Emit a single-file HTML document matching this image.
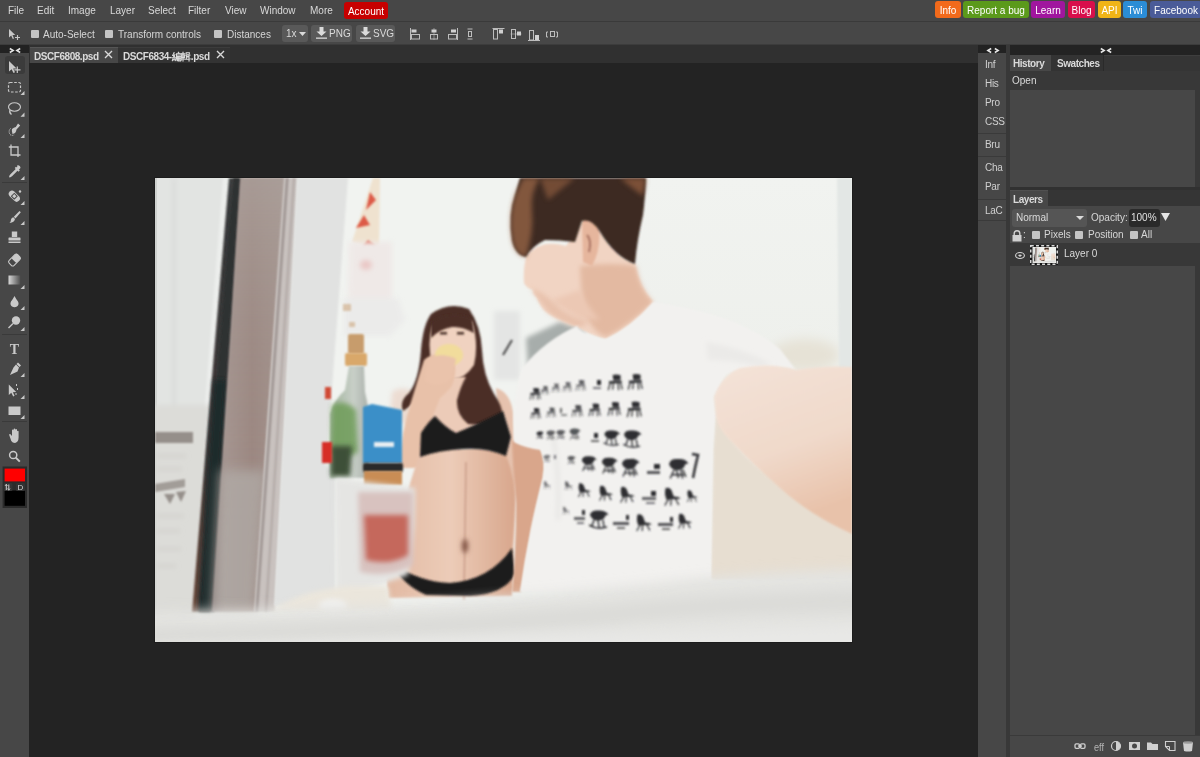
<!DOCTYPE html>
<html><head><meta charset="utf-8">
<style>
*{margin:0;padding:0;box-sizing:border-box}
html,body{width:1200px;height:757px;overflow:hidden;background:#232323;font-family:"Liberation Sans",sans-serif;color:#d6d6d6;font-size:10px}
.a{position:absolute}
.mi{position:absolute;top:5px;font-size:10px;color:#d9d9d9;line-height:12px;white-space:nowrap}
.btn{position:absolute;top:1px;height:17px;border-radius:3px;color:#fff;font-size:10px;line-height:19px;text-align:center;white-space:nowrap}
.cb{position:absolute;width:8px;height:8px;background:#c4c4c4;border-radius:1px}
.ot{position:absolute;font-size:10px;color:#d6d6d6;line-height:12px;white-space:nowrap}
.ob{position:absolute;top:25px;height:17px;background:#595959;border-radius:3px;color:#dadada;font-size:10px;line-height:17px;white-space:nowrap}
.tab{position:absolute;top:47px;height:16px;font-weight:bold;font-size:10px;line-height:17px;letter-spacing:-0.45px;color:#dadada;white-space:nowrap}
.ti{position:absolute;left:8px}
.cl{position:absolute;left:985px;font-size:10px;color:#d0d0d0;line-height:12px;letter-spacing:-0.3px}
.sep{position:absolute;height:1px;background:#3a3a3a}
svg{position:absolute;overflow:visible}
.mi,.ot,.ob,.btn,.tab,.cl,span.a{will-change:transform}
</style></head>
<body>
<!-- menubar -->
<div class="a" style="left:0;top:0;width:1200px;height:21px;background:#474747"></div>
<div class="a" style="left:0;top:21px;width:1200px;height:1px;background:#3a3a3a"></div>
<span class="mi" style="left:8px">File</span>
<span class="mi" style="left:37px">Edit</span>
<span class="mi" style="left:68px">Image</span>
<span class="mi" style="left:110px">Layer</span>
<span class="mi" style="left:148px">Select</span>
<span class="mi" style="left:188px">Filter</span>
<span class="mi" style="left:225px">View</span>
<span class="mi" style="left:260px">Window</span>
<span class="mi" style="left:310px">More</span>
<div class="btn" style="left:344px;top:2px;width:44px;background:#c70000">Account</div>
<div class="btn" style="left:935px;width:26px;background:#f26a1b">Info</div>
<div class="btn" style="left:963px;width:66px;background:#5b9a1b">Report a bug</div>
<div class="btn" style="left:1031px;width:34px;background:#a0169e">Learn</div>
<div class="btn" style="left:1068px;width:27px;background:#d80e4b">Blog</div>
<div class="btn" style="left:1098px;width:23px;background:#f0b417">API</div>
<div class="btn" style="left:1123px;width:24px;background:#2b8dd6">Twi</div>
<div class="btn" style="left:1150px;width:52px;background:#4a5b98">Facebook</div>

<!-- options bar -->
<div class="a" style="left:0;top:22px;width:1200px;height:23px;background:#474747"></div>
<svg style="left:9px;top:29px" width="12" height="11" viewBox="0 0 12 11"><path d="M0 0 L0 8.5 L2.2 6.6 L3.8 10 L5 9.4 L3.5 6.1 L6.3 6 Z" fill="#c8c8c8"/><path d="M8.5 6 V11 M6 8.5 H11" stroke="#c8c8c8" stroke-width="1.1"/></svg>
<div class="cb" style="left:31px;top:30px"></div>
<span class="ot" style="left:43px;top:29px">Auto-Select</span>
<div class="cb" style="left:105px;top:30px"></div>
<span class="ot" style="left:118px;top:29px">Transform controls</span>
<div class="cb" style="left:214px;top:30px"></div>
<span class="ot" style="left:227px;top:29px">Distances</span>
<div class="ob" style="left:282px;width:26px;padding-left:4px">1x</div>
<svg style="left:299px;top:32px" width="7" height="4" viewBox="0 0 7 4"><path d="M0 0 H7 L3.5 4 Z" fill="#dadada"/></svg>
<div class="ob" style="left:311px;width:41px;padding-left:18px">PNG</div>
<svg style="left:316px;top:27px" width="11" height="12" viewBox="0 0 11 12"><path d="M3.5 0 H7.5 V4.5 H10.5 L5.5 9 L0.5 4.5 H3.5 Z" fill="#dadada"/><rect x="0" y="10.5" width="11" height="1.3" fill="#dadada"/></svg>
<div class="ob" style="left:356px;width:39px;padding-left:17px">SVG</div>
<svg style="left:360px;top:27px" width="11" height="12" viewBox="0 0 11 12"><path d="M3.5 0 H7.5 V4.5 H10.5 L5.5 9 L0.5 4.5 H3.5 Z" fill="#dadada"/><rect x="0" y="10.5" width="11" height="1.3" fill="#dadada"/></svg>
<!-- align icons -->
<svg style="left:410px;top:28px" width="150" height="13" viewBox="0 0 150 13" fill="none" stroke="#bdbdbd" stroke-width="1">
  <path d="M0.5 0 V12"/><rect x="1.5" y="1.5" width="5" height="3" fill="#d0d0d0" stroke="none"/><rect x="1.5" y="6.5" width="8" height="4.5"/>
  <path d="M24 0 V12" stroke="#8a8a8a"/><rect x="21.5" y="1.5" width="5" height="3" fill="#d0d0d0" stroke="none"/><rect x="20.5" y="6.5" width="7" height="4.5"/>
  <path d="M47.5 0 V12"/><rect x="41" y="1.5" width="5" height="3" fill="#d0d0d0" stroke="none"/><rect x="38.5" y="6.5" width="8" height="4.5"/>
  <path d="M57.5 1 H62.5 M57.5 11 H62.5" /><rect x="58.5" y="3.5" width="3" height="5"/>
  <path d="M82.5 0.5 H94.5"/><rect x="83.5" y="1.5" width="4" height="9.5"/><rect x="89" y="1.5" width="4" height="4" fill="#d0d0d0" stroke="none"/>
  <path d="M100.5 6 H111.5" stroke="#8a8a8a"/><rect x="101.5" y="1.5" width="4" height="9"/><rect x="107" y="3.5" width="4" height="4" fill="#d0d0d0" stroke="none"/>
  <path d="M118 12.5 H130"/><rect x="119.5" y="2.5" width="4" height="9.5"/><rect x="125" y="7" width="4" height="5" fill="#d0d0d0" stroke="none"/>
  <path d="M136.5 4 V9 M147.5 4 V9"/><rect x="140.5" y="3.5" width="4" height="5"/><path d="M136.5 4 H138 M136.5 9 H138 M146 4 H147.5 M146 9 H147.5"/>
</svg>
<div class="a" style="left:0;top:44px;width:1200px;height:1px;background:#3c3c3c"></div>

<!-- tab strip -->
<div class="a" style="left:29px;top:45px;width:949px;height:18px;background:#303030"></div>
<div class="tab" style="left:30px;width:88px;background:#474747;border-top:1px solid #555"><span class="ti" style="left:4px">DSCF6808.psd</span></div>
<div class="tab" style="left:118px;width:112px;background:#333;border-top:1px solid #3c3c3c"><span class="ti" style="left:5px">DSCF6834-編輯.psd</span></div>
<svg style="left:104px;top:50px" width="9" height="9" viewBox="0 0 9 9"><path d="M1 1 L8 8 M8 1 L1 8" stroke="#d8d8d8" stroke-width="1.4"/></svg>
<svg style="left:216px;top:50px" width="9" height="9" viewBox="0 0 9 9"><path d="M1 1 L8 8 M8 1 L1 8" stroke="#d8d8d8" stroke-width="1.4"/></svg>

<!-- left tools -->
<div class="a" style="left:0;top:45px;width:29px;height:712px;background:#474747"></div>
<div class="a" style="left:0;top:45px;width:29px;height:8px;background:#222"></div>
<svg style="left:9px;top:48px" width="12" height="5" viewBox="0 0 12 5"><path d="M0.8 0.5 L4.2 2.5 L0.8 4.5 M11.2 0.5 L7.8 2.5 L11.2 4.5" fill="none" stroke="#e6e6e6" stroke-width="1.5"/></svg>
<div class="a" style="left:5px;top:56px;width:20px;height:18px;background:#3b3b3b;border-radius:3px"></div>
<svg style="left:0;top:0" width="29" height="757" viewBox="0 0 29 757">
 <g fill="#c9c9c9" stroke="none">
  <!-- corner triangles -->
  <path d="M24.5 91 V95 H20.5 Z"/><path d="M24.5 112.5 V116.8 H20.5 Z"/><path d="M24.5 134 V138 H20.5 Z"/>
  <path d="M24.5 176 V180 H20.5 Z"/><path d="M24.5 201 V205 H20.5 Z"/><path d="M24.5 221 V225 H20.5 Z"/>
  <path d="M24.5 285 V289 H20.5 Z"/><path d="M24.5 306 V310 H20.5 Z"/><path d="M24.5 327 V331 H20.5 Z"/>
  <path d="M24.5 373 V377 H20.5 Z"/><path d="M24.5 395 V399 H20.5 Z"/><path d="M24.5 415 V419 H20.5 Z"/>
  <!-- move -->
  <path d="M9 61 L9 71.5 L11.6 69.2 L13.5 73 L15 72.2 L13.2 68.5 L16.6 68.4 Z"/>
  <path d="M17.3 66.5 V73 M14.3 69.8 H20.5" stroke="#c9c9c9" stroke-width="1.2"/>
  <!-- marquee -->
  <rect x="8.5" y="82.5" width="12" height="9.5" rx="1.5" fill="none" stroke="#c9c9c9" stroke-width="1.2" stroke-dasharray="2.6 1.6"/>
  <!-- lasso -->
  <ellipse cx="14.5" cy="107" rx="6" ry="4.2" fill="none" stroke="#c9c9c9" stroke-width="1.1"/>
  <path d="M10 110 Q 9 113 11.5 114.5" fill="none" stroke="#c9c9c9" stroke-width="1.3"/>
  <!-- quick select -->
  <path d="M18 123.5 L20.2 125.6 L16.5 129.5 Q16 133.5 12.5 134 Q11.5 131 12 129 Q13.8 127.5 15.8 127 Z"/>
  <path d="M10.5 128.5 Q8 131 10 134.5 Q12 136 14.5 134.8" fill="none" stroke="#c9c9c9" stroke-width="1" stroke-dasharray="1.2 1"/>
  <!-- crop -->
  <path d="M11 144.5 V155 H20.5 M8.8 147 H18 V157" fill="none" stroke="#c9c9c9" stroke-width="1.3"/>
  <!-- eyedropper -->
  <path d="M17.5 165 Q20.5 165.5 20.5 168 L19 169.5 L19.8 170.5 L18.5 171.8 L17.5 170.8 L12 176.3 Q10.5 177.8 9.2 177.3 Q8.7 176 10.2 174.5 L15.7 169 L14.7 168 L16 166.7 L17 167.5 Z"/>
 </g>
 <g fill="#3a3a3a"><rect x="2" y="182" width="25" height="1"/><rect x="2" y="334" width="25" height="1"/><rect x="2" y="421" width="25" height="1"/></g>
 <g fill="#c9c9c9">
  <!-- heal (bandage) -->
  <g transform="rotate(45 14.5 196)"><rect x="8" y="193" width="13" height="6.5" rx="3.2"/><rect x="12" y="193.8" width="5" height="5" fill="#474747"/><rect x="13" y="194.8" width="3" height="3"/></g>
  <circle cx="20" cy="191.5" r="1.2"/>
  <!-- brush -->
  <path d="M19.5 211 L20.8 212.3 L15.5 218.5 L13.8 216.8 Z"/><path d="M13.3 217.3 L15 219 Q14.5 222.5 9.5 223 Q11 221.5 11 219.5 Q11.5 217.5 13.3 217.3 Z"/>
  <!-- stamp -->
  <path d="M11.8 231.5 H17.2 V237 H11.8 Z"/><rect x="8.5" y="237.5" width="12" height="3" rx="0.6"/><rect x="8.5" y="241.5" width="12" height="1.5"/>
  <!-- eraser -->
  <g transform="rotate(-45 14.5 260)"><rect x="8.5" y="256.5" width="12" height="7" rx="2" fill="none" stroke="#c9c9c9" stroke-width="1.1"/><rect x="13.5" y="256.5" width="7" height="7" rx="1.5"/></g>
 </g>
 <defs><linearGradient id="gr" x1="0" x2="1"><stop offset="0" stop-color="#d8d8d8"/><stop offset="1" stop-color="#4c4c4c"/></linearGradient></defs>
 <rect x="8.5" y="275.5" width="12" height="9" fill="url(#gr)"/>
 <g fill="#c9c9c9">
  <!-- blur drop -->
  <path d="M14.5 296 Q16 299 18 301.5 Q19.5 304.5 17 306.5 Q14.5 308 12 306.5 Q9.5 304.5 11 301.5 Q13 299 14.5 296 Z"/>
  <!-- dodge -->
  <circle cx="16" cy="320.5" r="4.2"/><path d="M13 323.5 L8.5 328" stroke="#c9c9c9" stroke-width="1.4"/>
  <!-- type T -->
  <text x="14.5" y="353.5" font-family="Liberation Serif" font-weight="bold" font-size="14" text-anchor="middle">T</text>
  <!-- pen -->
  <path d="M18 362.5 L21 365.5 L19.5 367 L16.5 364 Z"/><path d="M16 364.5 L19 367.5 L17.5 371.5 L10 375 L13.5 367.5 Z"/>
  <!-- path select -->
  <path d="M8.8 384.5 L8.8 395 L11.3 392.8 L13.2 396.5 L14.6 395.8 L12.9 392.2 L16.2 392 Z"/>
  <path d="M16.5 384 V386 M17.5 388 V390 M16 393 V395" stroke="#c9c9c9" stroke-width="1"/>
  <!-- rect -->
  <rect x="8.5" y="406.5" width="12" height="8.5"/>
  <!-- hand -->
  <path d="M9.2 435 Q9 433.8 10.2 434 L12 436 V430.5 Q12 429.5 12.9 429.5 Q13.6 429.5 13.6 430.5 V434.5 V429.5 Q13.7 428.5 14.5 428.5 Q15.3 428.5 15.3 429.5 V434.5 V430 Q15.4 429 16.2 429 Q17 429 17 430 V435 V431.5 Q17.1 430.7 17.8 430.7 Q18.6 430.7 18.6 431.5 V437.5 Q18.5 442 15 443 Q12.5 443 11.3 441 Z"/>
  <!-- zoom -->
  <circle cx="13.2" cy="455" r="3.6" fill="none" stroke="#c9c9c9" stroke-width="1.5"/><path d="M15.8 457.6 L19.8 461.6" stroke="#c9c9c9" stroke-width="2"/>
 </g>
 <!-- color -->
 <rect x="2.6" y="466.5" width="24.4" height="41.5" fill="#2b2b2b"/>
 <rect x="4.6" y="468.6" width="20.4" height="12.8" fill="#ff0000"/>
 <rect x="4.6" y="490.5" width="20.4" height="15.3" fill="#000"/>
 <rect x="3.5" y="483" width="9" height="8" rx="1.5" fill="#333"/>
 <rect x="16" y="483" width="9" height="8" rx="1.5" fill="#333"/>
 <path d="M6.3 484.5 V490 M8.8 484.5 V490" stroke="#cfcfcf" stroke-width="1"/><path d="M5 486 L6.3 484.2 L7.5 486 M7.6 488.5 L8.8 490.3 L10 488.5" fill="none" stroke="#cfcfcf" stroke-width="0.8"/>
 <text x="20.5" y="490" font-size="8" fill="#d6d6d6" text-anchor="middle" font-family="Liberation Sans">D</text>
</svg>
<!-- collapsed column -->
<div class="a" style="left:978px;top:45px;width:29px;height:712px;background:#474747"></div>
<div class="a" style="left:978px;top:45px;width:29px;height:8px;background:#222"></div>
<svg style="left:987px;top:48px" width="12" height="5" viewBox="0 0 12 5"><path d="M4.2 0.5 L0.8 2.5 L4.2 4.5 M7.8 0.5 L11.2 2.5 L7.8 4.5" fill="none" stroke="#e6e6e6" stroke-width="1.5"/></svg>
<span class="cl" style="top:59px">Inf</span>
<span class="cl" style="top:78px">His</span>
<span class="cl" style="top:97px">Pro</span>
<span class="cl" style="top:116px">CSS</span>
<div class="sep" style="left:978px;top:133px;width:29px"></div>
<span class="cl" style="top:139px">Bru</span>
<div class="sep" style="left:978px;top:156px;width:29px"></div>
<span class="cl" style="top:162px">Cha</span>
<span class="cl" style="top:181px">Par</span>
<div class="sep" style="left:978px;top:199px;width:29px"></div>
<span class="cl" style="top:205px">LaC</span>
<div class="sep" style="left:978px;top:220px;width:29px"></div>
<div class="a" style="left:1006px;top:45px;width:4px;height:712px;background:#383838"></div>

<!-- right panel -->
<div class="a" style="left:1010px;top:45px;width:190px;height:712px;background:#383838"></div>
<div class="a" style="left:1010px;top:45px;width:190px;height:10px;background:#232323"></div>
<svg style="left:1100px;top:48px" width="12" height="5" viewBox="0 0 12 5"><path d="M0.8 0.5 L4.2 2.5 L0.8 4.5 M11.2 0.5 L7.8 2.5 L11.2 4.5" fill="none" stroke="#e6e6e6" stroke-width="1.5"/></svg>
<div class="a" style="left:1010px;top:55px;width:190px;height:16px;background:#353535;border-top:1px solid #3e3e3e"></div>
<div class="tab" style="left:1010px;top:55px;width:41px;background:#474747"><span class="ti" style="left:3px">History</span></div>
<div class="tab" style="left:1051px;top:55px;width:53px;background:#333;border-right:1px solid #2a2a2a"><span class="ti" style="left:6px">Swatches</span></div>
<div class="a" style="left:1010px;top:71px;width:185px;height:19px;background:#383838"></div>
<span class="a" style="left:1012px;top:75px;font-size:10px;line-height:12px;color:#dadada">Open</span>
<div class="a" style="left:1010px;top:90px;width:185px;height:97px;background:#474747"></div>
<div class="a" style="left:1010px;top:187px;width:190px;height:3px;background:#313131"></div>
<div class="a" style="left:1010px;top:190px;width:190px;height:16px;background:#353535"></div>
<div class="tab" style="left:1010px;top:190px;width:38px;background:#474747;border-top:1px solid #505050"><span class="ti" style="left:3px">Layers</span></div>
<div class="a" style="left:1010px;top:206px;width:190px;height:37px;background:#474747"></div>
<div class="a" style="left:1012px;top:209px;width:75px;height:18px;background:#555;border-radius:3px"></div>
<span class="a" style="left:1016px;top:212px;font-size:10px;line-height:12px;color:#dadada">Normal</span>
<svg style="left:1076px;top:216px" width="8" height="4" viewBox="0 0 8 4"><path d="M0 0 H8 L4 4 Z" fill="#dadada"/></svg>
<span class="a" style="left:1091px;top:212px;font-size:10px;line-height:12px;color:#d6d6d6">Opacity:</span>
<div class="a" style="left:1129px;top:209px;width:31px;height:18px;background:#2a2a2a;border-radius:3px"></div>
<span class="a" style="left:1131px;top:212px;font-size:10px;line-height:12px;color:#e0e0e0">100%</span>
<svg style="left:1161px;top:213px" width="9" height="8" viewBox="0 0 9 8"><path d="M0 0 H9 L4.5 8 Z" fill="#e6e6e6"/></svg>
<svg style="left:1012px;top:230px" width="10" height="12" viewBox="0 0 10 12"><path d="M2.2 5 V3.5 Q2.2 0.8 5 0.8 Q7.8 0.8 7.8 3.5 V5" fill="none" stroke="#d0d0d0" stroke-width="1.4"/><rect x="0.5" y="5" width="9" height="6.5" fill="#d0d0d0"/></svg>
<span class="a" style="left:1023px;top:229px;font-size:10px;line-height:12px;color:#d6d6d6">:</span>
<div class="cb" style="left:1032px;top:231px"></div>
<span class="a" style="left:1044px;top:229px;font-size:10px;line-height:12px;color:#d6d6d6">Pixels</span>
<div class="cb" style="left:1075px;top:231px"></div>
<span class="a" style="left:1088px;top:229px;font-size:10px;line-height:12px;color:#d6d6d6">Position</span>
<div class="cb" style="left:1130px;top:231px"></div>
<span class="a" style="left:1141px;top:229px;font-size:10px;line-height:12px;color:#d6d6d6">All</span>
<div class="a" style="left:1010px;top:243px;width:190px;height:23px;background:#383838"></div>
<svg style="left:1015px;top:252px" width="10" height="7" viewBox="0 0 10 7"><ellipse cx="5" cy="3.5" rx="4.4" ry="3" fill="none" stroke="#d4d4d4" stroke-width="1.1"/><path d="M3 3.2 Q5 1.6 7 3.2 L5 5 Z" fill="#d4d4d4"/></svg>
<svg style="left:1030px;top:245px" width="28" height="20" viewBox="0 0 28 20">
 <defs><clipPath id="thc"><rect x="3" y="2.5" width="22.5" height="15"/></clipPath></defs>
 <rect x="0" y="0" width="28" height="20" fill="#151515"/>
 <rect x="0.75" y="0.75" width="26.5" height="18.5" fill="none" stroke="#d8d8d8" stroke-width="1.5" stroke-dasharray="3 2.2"/>
 <rect x="2.5" y="2" width="23.5" height="16" fill="#f0f0ee"/>
 <g clip-path="url(#thc)"><use href="#ph" transform="translate(3,2.5) scale(0.0323)"/></g>
</svg>
<span class="a" style="left:1064px;top:248px;font-size:10px;line-height:12px;color:#dadada">Layer 0</span>
<div class="a" style="left:1010px;top:266px;width:185px;height:469px;background:#474747"></div>
<div class="a" style="left:1010px;top:735px;width:190px;height:1px;background:#3a3a3a"></div>
<div class="a" style="left:1010px;top:736px;width:190px;height:21px;background:#474747"></div>
<svg style="left:1070px;top:738px" width="130" height="16" viewBox="0 0 130 16" fill="#cfcfcf">
 <rect x="5" y="5.8" width="4.5" height="4.5" rx="1.2" fill="none" stroke="#cfcfcf" stroke-width="1.3"/><rect x="10.5" y="5.8" width="4.5" height="4.5" rx="1.2" fill="none" stroke="#cfcfcf" stroke-width="1.3"/><rect x="8" y="7.4" width="4" height="1.3"/>
 <text x="24" y="12.5" font-size="10" fill="#b4b4b4" font-family="Liberation Sans" textLength="10" lengthAdjust="spacingAndGlyphs">e&#8203;f&#8203;f</text>
 <circle cx="46" cy="8" r="4.5" fill="none" stroke="#cfcfcf" stroke-width="1.2"/><path d="M46 3.5 A4.5 4.5 0 0 1 46 12.5 Z"/>
 <rect x="59" y="4" width="11" height="8"/><circle cx="64.5" cy="8" r="2.5" fill="#474747"/>
 <path d="M77 4.5 H81 L82.5 6 H88 V12 H77 Z"/>
 <path d="M95.5 3.5 H105 V12.5 H99.5 L95.5 8.5 Z" fill="none" stroke="#cfcfcf" stroke-width="1.1"/><path d="M95.5 8.5 L99.5 8.5 V12.5" fill="none" stroke="#cfcfcf" stroke-width="1"/>
 <path d="M113 4.5 H123 L122 13 Q118 14 114 13 Z"/><ellipse cx="118" cy="4.5" rx="5" ry="1.2" fill="#9a9a9a"/>
</svg>
<!-- PHOTO -->
<div class="a" style="left:154px;top:177px;width:699px;height:466px;background:#1c1c1c"></div>
<svg style="left:155px;top:178px;overflow:hidden" width="697" height="464" viewBox="0 0 697 464">
<g id="ph"><defs>
 <filter id="b1" filterUnits="userSpaceOnUse" x="100" y="150" width="800" height="520"><feGaussianBlur stdDeviation="1"/></filter>
 <filter id="b2" filterUnits="userSpaceOnUse" x="100" y="150" width="800" height="520"><feGaussianBlur stdDeviation="2.5"/></filter>
 <filter id="b3" filterUnits="userSpaceOnUse" x="100" y="150" width="800" height="520"><feGaussianBlur stdDeviation="6"/></filter>
 <linearGradient id="door" x1="0" x2="1"><stop offset="0" stop-color="#857a78"/><stop offset="0.18" stop-color="#a59590"/><stop offset="0.55" stop-color="#9b8680"/><stop offset="1" stop-color="#a4948e"/></linearGradient>
 <linearGradient id="doorV" x1="0" y1="0" x2="0" y2="1"><stop offset="0" stop-color="#aca19c" stop-opacity="0.75"/><stop offset="0.5" stop-color="#a39690" stop-opacity="0.3"/><stop offset="1" stop-color="#a39690" stop-opacity="0"/></linearGradient>
 <linearGradient id="gask" x1="0" x2="1"><stop offset="0" stop-color="#6e4c3c"/><stop offset="0.3" stop-color="#3b3434"/><stop offset="0.75" stop-color="#383a3b"/><stop offset="1" stop-color="#7a716e"/></linearGradient>
 <linearGradient id="shelf" x1="0" y1="0" x2="0" y2="1"><stop offset="0" stop-color="#dededc"/><stop offset="0.45" stop-color="#d9d9d7"/><stop offset="1" stop-color="#e7e7e5"/></linearGradient>
 <linearGradient id="wallR" x1="0" y1="0" x2="0" y2="1"><stop offset="0" stop-color="#f1f3f0"/><stop offset="0.45" stop-color="#eef0ec"/><stop offset="0.75" stop-color="#e9e6dc"/><stop offset="1" stop-color="#e6ded2"/></linearGradient>
 <linearGradient id="armg" x1="0" y1="0" x2="0.3" y2="1"><stop offset="0" stop-color="#f4e3d8"/><stop offset="0.6" stop-color="#f0d9ca"/><stop offset="1" stop-color="#e8c2aa"/></linearGradient>
 <linearGradient id="belly" x1="0" y1="0" x2="1" y2="0"><stop offset="0" stop-color="#e2b9a2"/><stop offset="0.5" stop-color="#ecccb8"/><stop offset="1" stop-color="#d8a68c"/></linearGradient>
 <linearGradient id="bottle" x1="0" x2="1"><stop offset="0" stop-color="#9fb29a"/><stop offset="0.6" stop-color="#c8cfc8"/><stop offset="1" stop-color="#aab0aa"/></linearGradient>
</defs>
<g transform="translate(-155,-178)">
 <!-- base wall -->
 <rect x="155" y="178" width="697" height="464" fill="#f1f3f0"/>
 <rect x="600" y="178" width="252" height="400" fill="url(#wallR)"/>
 <ellipse cx="805" cy="355" rx="35" ry="16" fill="#e6e2d6" filter="url(#b3)"/>
 <!-- right wall edge strip -->
 <path d="M837 178 H852 V372 H839 Z" fill="#e3e7e5" filter="url(#b1)"/>
 <!-- left white fridge side -->
 <path d="M155 178 H229 L192 642 H155 Z" fill="#e2e4e2"/>
 <path d="M172 178 H176 L176 642 H172 Z" fill="#dadcda" filter="url(#b2)"/>
 <path d="M155 178 H157 V642 H155 Z" fill="#cfd1cf"/>
 <path d="M223 178 H229 L192 642 H186 Z" fill="#eceeec" filter="url(#b1)"/>
 <!-- document -->
 <path d="M155 405 H210 L196 625 H155 Z" fill="#dcdcd8" filter="url(#b2)"/>
 <path d="M155 432 H193 V443 H155 Z" fill="#958f8a" filter="url(#b1)"/>
 <path d="M155 484 L185 479 L185 487 L155 492 Z" fill="#a29d98" filter="url(#b1)"/>
 <path d="M164 494 L170 504 L175 494 Z M176 492 L181 502 L186 491 Z" fill="#958f8a" filter="url(#b1)"/>
 <path d="M157 455 H186 V457 H157 Z M157 468 H182 V470 H157 Z M157 515 H184 V517 H157 Z M157 530 H180 V532 H157 Z M157 548 H181 V550 H157 Z M157 565 H176 V567 H157 Z" fill="#cdcbc7" filter="url(#b2)"/>
 <!-- gasket dark -->
 <path d="M229 178 H243 L214 612 H192 Z" fill="url(#gask)" filter="url(#b1)"/>
 <path d="M233 178 H240 L210 612 H199 Z" fill="#2f3233" filter="url(#b1)"/>
 <path d="M214 380 H226 L212 612 H199 Z" fill="#1f2a2c" filter="url(#b2)"/>
 <!-- gray door -->
 <path d="M241 178 H285 L255 612 H212 Z" fill="url(#door)" filter="url(#b1)"/>
 <path d="M241 178 H285 L262 520 H218 Z" fill="url(#doorV)" filter="url(#b1)"/>
 <path d="M220 470 H266 L256 612 H212 Z" fill="#b0aaa6" opacity="0.8" filter="url(#b3)"/>
 <!-- trim -->
 <path d="M284 178 H298 L275 612 H254 Z" fill="#c9c2bf" filter="url(#b1)"/>
 <path d="M286 178 H288.5 L258 612 H255.5 Z" fill="#9c9390" filter="url(#b1)"/>
 <path d="M293 178 H295 L267 612 H265 Z" fill="#b0a8a5" filter="url(#b1)"/>
 <!-- inner door face -->
 <path d="M297 178 H348 L326 466 L335 476 L335 606 H274 Z" fill="#e1e2e1" filter="url(#b1)"/>
 <!-- fridge interior items -->
 <path d="M373 178 H380 L379 250 L352 242 Z" fill="#efe2cf" filter="url(#b1)"/>
 <path d="M356 228 L364 215 L370 225 Z M370 192 L376 200 L366 210 Z M368 240 L376 246 L362 247 Z" fill="#dd5a46" filter="url(#b1)"/>
 <path d="M349 242 H392 V305 H348 Z" fill="#efe9e7" filter="url(#b2)"/>
 <ellipse cx="366" cy="265" rx="6" ry="5" fill="#eac8c6" filter="url(#b2)"/>
 <path d="M344 298 H398 L405 320 L390 336 H344 Z" fill="#ebebea" filter="url(#b2)"/>
 <path d="M343 304 H351 V311 H343 Z M349 322 H355 V327 H349 Z" fill="#d2b290" opacity="0.7" filter="url(#b1)"/>
 <!-- light box behind -->
 <path d="M494 311 H520 V380 H494 Z" fill="#e4e5e4" filter="url(#b2)"/>
 <path d="M503 355 L512 340" stroke="#444" stroke-width="2" filter="url(#b1)"/>
 <!-- gray object behind man -->
 <path d="M526 338 L560 322 L584 330 L580 365 L528 372 Z" fill="#a7adab" filter="url(#b2)"/>
 <!-- woman left upper arm (behind) -->
 <path d="M392 392 Q402 385 414 392 L410 425 L390 420 Z" fill="#ecdcd2" filter="url(#b2)"/>
 <!-- woman right shoulder/arm -->
 <path d="M496 388 Q510 392 513 412 L516 470 L512 590 L500 590 L500 440 Z" fill="#e6c2ae" filter="url(#b1)"/>
 <!-- chest skin -->
 <path d="M436 372 L470 372 Q460 395 462 412 L503 410 L512 440 L420 440 Q428 400 436 372 Z" fill="#eccbb8" filter="url(#b1)"/>
 <!-- woman hair -->
 <path d="M431 314 Q449 301 469 309 Q481 326 482 350 Q483 375 494 394 Q504 408 502 418 Q490 427 468 424 Q456 414 457 400 Q461 385 466 377 L440 377 Q433 386 424 395 Q412 405 403 411 Q399 401 409 393 Q419 380 421 350 Q423 325 431 314 Z" fill="#4b2f26" filter="url(#b1)"/>
 <!-- woman face -->
 <path d="M432 326 Q450 314 472 321 Q479 344 474 365 Q464 380 452 379 Q438 378 432 363 Q427 345 432 326 Z" fill="#f0d2c0" filter="url(#b1)"/>
 <path d="M431 322 Q448 310 472 318 L474 333 Q462 326 452 327 Q440 329 431 338 Z" fill="#4b2f26" filter="url(#b1)"/>
 <path d="M440 332 h7 v2.5 h-7z M457 332 h7 v2.5 h-7z" fill="#4a3028" filter="url(#b1)"/>
 <!-- woman forearm + hand -->
 <path d="M424 360 Q436 350 453 357 Q458 372 452 386 Q445 394 440 398 Q426 430 420 468 L399 468 Q401 432 411 402 Q417 382 424 360 Z" fill="#e8c1a9" filter="url(#b1)"/>
 <ellipse cx="449" cy="355" rx="14" ry="11" fill="#f1dc9c" filter="url(#b1)"/>
 <path d="M427 360 Q440 351 456 359 L452 378 Q440 390 425 381 Z" fill="#eac3ab" filter="url(#b1)"/>
 <!-- woman body -->
 <path d="M420 452 Q440 446 463 449 Q492 446 506 455 Q516 480 515 505 Q514 530 512 548 L512 596 L388 598 L386 570 Q398 520 420 452 Z" fill="url(#belly)" filter="url(#b1)"/>
 <!-- bra -->
 <path d="M421 433 Q428 422 435 416 Q446 428 456 433 Q478 424 503 411 L511 437 L506 456 Q485 447 463 449 Q440 450 420 457 Z" fill="#1d1c1e" filter="url(#b1)"/>
 <!-- navel & line -->
 <path d="M466 462 L464 600" stroke="#c49684" stroke-width="1.3" filter="url(#b1)"/>
 <ellipse cx="465" cy="546" rx="3" ry="7" fill="#7c5040" filter="url(#b2)"/>
 <!-- underwear -->
 <path d="M391 563 Q420 582 450 583 Q490 580 512 548 L515 574 Q505 594 470 596 L426 595 Q403 585 391 563 Z" fill="#1b1a1c" filter="url(#b1)"/>
 <!-- cork & cap -->
 <rect x="348" y="334" width="16" height="20" rx="2" fill="#c79c6c" filter="url(#b1)"/>
 <rect x="345" y="353" width="22" height="13" rx="2" fill="#d9a86a" filter="url(#b1)"/>
 <!-- green bottle -->
 <path d="M349 366 H364 L365 392 Q368 405 369 415 L369 478 H330 L330 414 Q334 400 345 390 Z" fill="url(#bottle)" filter="url(#b1)"/>
 <path d="M332 405 Q344 398 356 410 L358 452 Q346 460 331 452 Z" fill="#6e9c58" opacity="0.85" filter="url(#b2)"/>
 <path d="M331 446 H352 L350 476 H331 Z" fill="#3e5038" filter="url(#b2)"/>
 <rect x="322" y="442" width="10" height="21" fill="#d62f25" filter="url(#b1)"/>
 <rect x="325" y="387" width="6" height="12" fill="#d04836" filter="url(#b1)"/>
 <!-- blue carton -->
 <path d="M363 407 L372 404 L402 410 L402 463 L363 463 Z" fill="#3a8fc8" filter="url(#b1)"/>
 <path d="M374 442 h20 v5 h-20z" fill="#e8eef2" filter="url(#b1)"/>
 <!-- jar -->
 <rect x="363" y="463" width="40" height="9" rx="2" fill="#2b2b2c" filter="url(#b1)"/>
 <rect x="364" y="471" width="38" height="14" fill="#c98d55" filter="url(#b1)"/>
 <!-- door shelf translucent -->
 <path d="M335 478 L415 488 L414 525 L408 575 L336 600 Z" fill="#e5e5e3" filter="url(#b2)"/>
 <path d="M358 492 H413 V565 Q390 578 360 572 Z" fill="#d8c2bf" filter="url(#b2)"/>
 <path d="M364 515 H408 V555 Q390 566 366 560 Z" fill="#c5675c" filter="url(#b2)"/>
 <!-- man left arm -->
 <path d="M512 440 Q525 446 540 448 Q546 462 543 478 Q535 510 531 530 Q525 560 521 592 L512 592 Q516 550 516 505 Q513 470 512 440 Z" fill="#d9a68b" filter="url(#b1)"/>
 <!-- man neck & face -->
 <path d="M526 257 Q540 238 566 246 L582 222 L600 231 Q615 257 635 264 Q638 285 653 302 Q640 322 606 339 Q590 335 577 327 Q566 323 556 318 Q546 313 543 309 Q538 302 537 298 Q532 293 533 290 Q526 288 524 283 Q523 270 526 257 Z" fill="#f1d4c3" filter="url(#b1)"/>
 <path d="M580 266 Q612 262 636 266 Q640 290 653 302 Q630 325 606 337 Q588 330 582 300 Z" fill="#e3b9a1" filter="url(#b2)"/>
 <path d="M552 300 Q566 310 580 318 L600 320 Q586 305 580 290 Z" fill="#ecc8b4" filter="url(#b2)"/>
 <path d="M530 288 Q540 300 548 312 Q560 322 578 328 L590 322 Q570 318 556 305 Q544 292 530 288 Z" fill="#e2b59d" opacity="0.6" filter="url(#b2)"/>
 <!-- ear -->
 <path d="M582 220 Q595 212 599 228 Q601 250 592 266 L583 262 Z" fill="#e6b69d" filter="url(#b1)"/>
 <path d="M587 235 Q592 240 589 252" stroke="#a87262" stroke-width="2" fill="none" filter="url(#b1)"/>
 <!-- man hair -->
 <path d="M520 178 H646 Q645 200 643 215 Q637 240 635 264 Q615 257 600 232 Q592 218 582 221 L575 242 Q560 240 545 240 Q532 246 526 257 Q515 255 512 240 Q508 215 515 195 Z" fill="#3d2b22" filter="url(#b1)"/>
 <path d="M512 240 Q508 215 515 195 L523 178 H540 Q530 192 532 212 Q534 232 526 257 Q515 255 512 240 Z" fill="#a06a48" opacity="0.7" filter="url(#b2)"/>
 <path d="M540 178 H575 Q560 190 548 200 Z" fill="#8a5a3e" opacity="0.7" filter="url(#b2)"/>
 <path d="M620 178 H646 L643 196 Q632 188 620 178 Z" fill="#8c5a3c" opacity="0.8" filter="url(#b2)"/>
 <!-- t-shirt -->
 <path d="M577 327 Q592 340 606 339 Q630 328 653 302 Q680 306 703 312 Q750 324 780 349 L796 370 Q760 362 726 374 L714 397 L716 417 L714 449 L712 592 L520 592 Q525 560 531 530 Q535 510 543 478 Q546 462 541 450 Q525 448 514 442 Q512 400 522 368 Q545 340 579 325 Z" fill="#f2f1ef" filter="url(#b1)"/>
 <path d="M706 342 Q740 347 772 364 L760 367 Q735 360 708 360 Z" fill="#ebeae8" filter="url(#b2)"/>
 <path d="M552 430 Q560 470 558 520" stroke="#e4e3e1" stroke-width="3" fill="none" filter="url(#b2)"/>
 <!-- wall between shirt and arm -->
 <path d="M716 417 Q735 450 760 470 Q800 505 852 534 V580 H712 L714 449 Z" fill="#e7ded1" filter="url(#b1)"/>
 <!-- arm -->
 <path d="M796 370 Q825 365 852 367 V534 Q810 515 780 488 Q750 462 730 440 Q718 428 716 417 L714 397 Q722 375 740 368 Q770 362 796 370 Z" fill="url(#armg)" filter="url(#b1)"/>
 <!-- chair prints -->
 <symbol id="lcw" viewBox="0 0 20 20"><path d="M7 0.5 Q12 -0.5 17 0.8 L17 7 L8 7.5 Z M2 8.5 L18 7.5 L18.5 10.5 L3 11.5 Z" fill="#2e2f33"/><path d="M4 11 L1.5 19.5 M8 11 L7 19 M14 10.5 L14.5 19.5 M17 10.5 L19 18.5" stroke="#2e2f33" stroke-width="1.6" fill="none"/></symbol>
 <symbol id="arm" viewBox="0 0 20 20"><path d="M1 6 Q2 0.5 9 1 Q16 0 19.5 5 L16.5 6 Q15 11.5 9 11.5 Q3 11.5 1 6 Z" fill="#2e2f33"/><path d="M6 11 L2 19.5 M8 11 L10 19 M12 11 L14 19.5 M14 11 L17 18 M4 16 L15 16" stroke="#2e2f33" stroke-width="1.4" fill="none"/></symbol>
 <symbol id="side" viewBox="0 0 20 20"><path d="M3 0.5 Q9 -0.5 10.5 6 L12 10 Q18 10 19.5 12.5 L4 13.5 Q1 7 3 0.5 Z" fill="#2e2f33"/><path d="M6 13 L2 20 M9 13 L8.5 20 M14 12.5 L17.5 19.5" stroke="#2e2f33" stroke-width="1.5" fill="none"/></symbol>
 <symbol id="rock" viewBox="0 0 20 20"><path d="M1 5 Q2 0 9 0.5 Q16 0 19.5 4.5 L16.5 5.5 Q15 10.5 9 10.5 Q3 10.5 1 5 Z" fill="#2e2f33"/><path d="M5 10 L3 16 M9 10 L10 17 M14 10 L15 17 M0 15 Q8 20 18 17" stroke="#2e2f33" stroke-width="1.5" fill="none"/></symbol>
 <g filter="url(#b1)">
  <use href="#lcw" x="529" y="386" width="12" height="16"/>
  <use href="#lcw" x="540" y="384" width="9" height="13" opacity="0.75"/>
  <use href="#lcw" x="551" y="381" width="9" height="14" opacity="0.7"/>
  <use href="#lcw" x="562" y="379" width="10" height="16" opacity="0.7"/>
  <use href="#lcw" x="575" y="377" width="11" height="17" opacity="0.75"/>
  <use href="#lcw" x="607" y="374" width="16" height="17"/>
  <use href="#lcw" x="627" y="373" width="16" height="18"/>
  <use href="#lcw" x="530" y="407" width="11" height="13"/>
  <use href="#lcw" x="546" y="405" width="10" height="15" opacity="0.8"/>
  <use href="#lcw" x="571" y="402" width="12" height="18" opacity="0.85"/>
  <use href="#lcw" x="588" y="401" width="13" height="18"/>
  <use href="#lcw" x="607" y="400" width="14" height="18"/>
  <use href="#lcw" x="626" y="400" width="16" height="19"/>
  <use href="#arm" x="536" y="428" width="8" height="14"/>
  <use href="#arm" x="546" y="427" width="10" height="16" opacity="0.75"/>
  <use href="#arm" x="556" y="426" width="10" height="17" opacity="0.75"/>
  <use href="#arm" x="569" y="425" width="12" height="18" opacity="0.8"/>
  <use href="#rock" x="603" y="430" width="18" height="17"/>
  <use href="#rock" x="623" y="430" width="19" height="19"/>
  <use href="#arm" x="543" y="451" width="8" height="15" opacity="0.6"/>
  <use href="#arm" x="567" y="452" width="9" height="16" opacity="0.75"/>
  <use href="#arm" x="581" y="453" width="16" height="21"/>
  <use href="#arm" x="601" y="455" width="17" height="21"/>
  <use href="#arm" x="621" y="456" width="19" height="23"/>
  <use href="#arm" x="667" y="458" width="23" height="21"/>
  <path d="M692 454 L698 455 L695 468 L693 478" stroke="#2e2f33" stroke-width="2.5" fill="none"/>
  <use href="#side" x="543" y="478" width="8" height="14" opacity="0.6"/>
  <use href="#side" x="564" y="478" width="9" height="15" opacity="0.7"/>
  <use href="#side" x="577" y="480" width="14" height="20"/>
  <use href="#side" x="598" y="482" width="15" height="22"/>
  <use href="#side" x="619" y="484" width="16" height="21"/>
  <use href="#side" x="663" y="487" width="18" height="19"/>
  <use href="#side" x="686" y="486" width="12" height="20"/>
  <use href="#side" x="562" y="501" width="8" height="19" opacity="0.6"/>
  <use href="#rock" x="589" y="509" width="20" height="22"/>
  <use href="#side" x="635" y="512" width="17" height="21"/>
  <use href="#side" x="677" y="512" width="15" height="18"/>
  <g fill="#2e2f33">
   <rect x="597" y="380" width="4" height="5"/><rect x="593" y="387" width="8" height="2" opacity="0.6"/>
   <rect x="560" y="408" width="2" height="5" opacity="0.7"/><rect x="561" y="414" width="6" height="2" opacity="0.5"/>
   <rect x="594" y="433" width="4" height="5"/><rect x="591" y="440" width="8" height="2" opacity="0.7"/>
   <rect x="554" y="455" width="2" height="4" opacity="0.6"/>
   <rect x="654" y="464" width="6" height="5"/><rect x="647" y="471" width="13" height="3" opacity="0.8"/>
   <rect x="651" y="491" width="5" height="5"/><rect x="642" y="497" width="14" height="3" opacity="0.7"/><rect x="646" y="502" width="9" height="2" opacity="0.6"/>
   <rect x="582" y="510" width="3" height="5"/><rect x="574" y="517" width="11" height="3" opacity="0.7"/><rect x="577" y="522" width="7" height="2" opacity="0.6"/>
   <rect x="626" y="515" width="3" height="5"/><rect x="613" y="522" width="16" height="3" opacity="0.8"/><rect x="617" y="527" width="8" height="2" opacity="0.7"/>
   <rect x="670" y="517" width="3" height="5"/><rect x="658" y="523" width="15" height="3" opacity="0.8"/><rect x="662" y="528" width="8" height="2" opacity="0.7"/>
  </g>
 </g>
 <!-- bottom blurred shelf -->
 <path d="M270 612 Q300 590 350 586 H388 L392 612 Z" fill="#ebe6dc" filter="url(#b2)"/>
 <ellipse cx="333" cy="606" rx="14" ry="7" fill="#f2f2f0" filter="url(#b2)"/>
 <path d="M120 612 Q300 610 450 602 Q600 590 700 578 Q790 570 880 568 V680 H120 Z" fill="#e3e3e0" filter="url(#b3)"/>
 <path d="M120 628 Q400 622 600 606 Q750 592 880 590 L880 612 Q700 612 600 625 Q400 640 120 645 Z" fill="#dbdbd8" filter="url(#b3)"/>
 <path d="M120 650 Q400 640 880 625 V680 H120 Z" fill="#e8e8e6" filter="url(#b3)"/>
 </g>
</g>
</svg>
</body></html>
